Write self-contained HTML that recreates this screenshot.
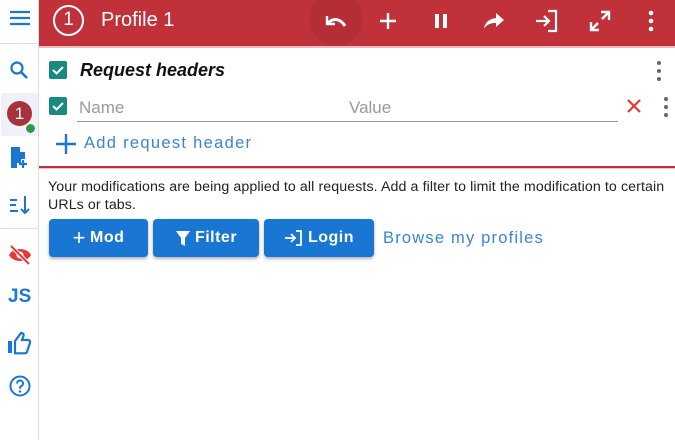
<!DOCTYPE html>
<html><head><meta charset="utf-8"><style>
*{margin:0;padding:0;box-sizing:border-box}
body{width:675px;height:440px;overflow:hidden;background:#fff;font-family:"Liberation Sans",sans-serif;position:relative}
.abs{position:absolute}
#side{left:0;top:0;width:39px;height:440px;border-right:1px solid #ddd;background:#fff}
#hdr{left:39px;top:0;width:636px;height:46px;background:#c0313a;overflow:hidden}
.btn{position:absolute;top:219px;height:38px;background:#1976d2;color:#fff;border-radius:4px;box-shadow:0 2px 3px rgba(0,0,0,.3);font-size:16px;font-weight:bold;display:flex;align-items:center;justify-content:center;gap:4px;letter-spacing:.5px}
.cb{position:absolute;width:18px;height:18px;background:#1a8a7e;border-radius:2px}
</style></head><body>
<div id="side" class="abs">
 <svg class="abs" style="left:9px;top:9px" width="22" height="18"><path d="M1 3h20M1 9h20M1 15h20" stroke="#1976d2" stroke-width="2.2"/></svg>
 <div class="abs" style="left:0;top:43px;width:39px;border-top:1px solid #e2e2e2"></div>
 <svg class="abs" style="left:9px;top:60px" width="22" height="22"><circle cx="8" cy="8" r="5.5" stroke="#1976d2" stroke-width="2.2" fill="none"/><path d="M12 12l6 6" stroke="#1976d2" stroke-width="2.6"/></svg>
 <div class="abs" style="left:1px;top:93px;width:37px;height:43px;background:#eef2f8;border-radius:3px"></div>
 <div class="abs" style="left:7px;top:101px;width:25px;height:25px;border-radius:50%;background:#a8323b;color:#fff;font-size:17px;text-align:center;line-height:25px">1</div>
 <div class="abs" style="left:25px;top:123px;width:11px;height:11px;border-radius:50%;background:#2e9a48;border:1px solid #fff"></div>
 <svg class="abs" style="left:9px;top:146px" width="24" height="24"><path d="M2 1h9l5 5v7h-4v4h-4v5H2z" fill="#1976d2"/><path d="M11 1v5h5" fill="#fff"/><path d="M14 14v8M10 18h8" stroke="#1976d2" stroke-width="2.2"/></svg>
 <svg class="abs" style="left:8px;top:194px" width="24" height="22"><path d="M2 6h7M2 11h6M2 17h8" stroke="#1976d2" stroke-width="2"/><path d="M17 2v17M13 15l4 4 4-4" stroke="#1976d2" stroke-width="2" fill="none"/></svg>
 <div class="abs" style="left:0;top:228px;width:39px;border-top:1px solid #e2e2e2"></div>
 <svg class="abs" style="left:8px;top:244px" width="24" height="22"><path d="M1 11c4-8 18-8 22 0-4 8-18 8-22 0z" fill="#e53935"/><circle cx="12" cy="11" r="3.5" fill="#fff"/><path d="M3 2l18 18" stroke="#fff" stroke-width="4"/><path d="M3 2l18 18" stroke="#e53935" stroke-width="2"/></svg>
 <div class="abs" style="left:8px;top:286px;font-size:19px;font-weight:bold;color:#1976d2">JS</div>
 <svg class="abs" style="left:7px;top:331px" width="26" height="24"><rect x="1" y="10" width="4" height="12" fill="#1976d2"/><path d="M8 10l6-8c2 0 3 1 2.5 3L15 9h6c1.5 0 2.5 1.2 2 2.8l-3 9c-.4 1-1.2 1.5-2.2 1.5H8z" fill="none" stroke="#1976d2" stroke-width="2.2"/></svg>
 <svg class="abs" style="left:9px;top:375px" width="22" height="22"><circle cx="11" cy="11" r="9.5" stroke="#1976d2" stroke-width="2" fill="none"/><path d="M8 8.5a3 3 0 1 1 4 2.8c-1 .5-1 1-1 2.5" stroke="#1976d2" stroke-width="2" fill="none"/><circle cx="11" cy="16.5" r="1.2" fill="#1976d2"/></svg>
</div>
<div id="hdr" class="abs">
 <div class="abs" style="left:14px;top:5px;width:31px;height:31px;border:2.5px solid #fff;border-radius:50%;color:#fff;font-size:19px;text-align:center;line-height:26px">1</div>
 <div class="abs" style="left:62px;top:9px;color:#fff;font-size:20px">Profile 1</div>
 <div class="abs" style="left:270px;top:-8px;width:54px;height:54px;border-radius:50%;background:#b52e36"></div>
 <svg class="abs" style="left:284px;top:12px" width="26" height="22"><path d="M4 4v8h8" fill="none" stroke="#fff" stroke-width="2.4"/><path d="M5 11c5-5 12-5 17 3" fill="none" stroke="#fff" stroke-width="3"/></svg>
 <svg class="abs" style="left:339px;top:11px" width="20" height="20"><path d="M10 2v16M2 10h16" stroke="#fff" stroke-width="2.4"/></svg>
 <svg class="abs" style="left:392px;top:11px" width="20" height="20"><rect x="4" y="3" width="4" height="14" fill="#fff"/><rect x="12" y="3" width="4" height="14" fill="#fff"/></svg>
 <svg class="abs" style="left:443px;top:11px" width="24" height="22"><path d="M14 2l8 7-8 7v-4C9 12 5 13 2 18c1-7 5-10 12-11z" fill="#fff"/></svg>
 <svg class="abs" style="left:495px;top:9px" width="26" height="24"><path d="M2 12h12M10 7l5 5-5 5" fill="none" stroke="#fff" stroke-width="2.2"/><path d="M14 2h8v20h-8" fill="none" stroke="#fff" stroke-width="2.2"/></svg>
 <svg class="abs" style="left:549px;top:9px" width="24" height="24"><path d="M13 3h8v8M21 3l-7 7M3 13v8h8M3 21l7-7" fill="none" stroke="#fff" stroke-width="2.4"/></svg>
 <svg class="abs" style="left:607px;top:10px" width="10" height="24"><circle cx="5" cy="3" r="2.3" fill="#fff"/><circle cx="5" cy="11" r="2.3" fill="#fff"/><circle cx="5" cy="19" r="2.3" fill="#fff"/></svg>
</div>
<div class="abs" style="left:39px;top:46px;width:636px;height:2px;background:#f3b9bc"></div>
<div class="cb" style="left:49px;top:61px"><svg width="18" height="18"><path d="M4 9l3.5 3.5L14 6" stroke="#fff" stroke-width="2" fill="none"/></svg></div>
<div class="abs" style="left:80px;top:60px;font-size:18px;font-weight:bold;font-style:italic;color:#111">Request headers</div>
<svg class="abs" style="left:654px;top:60px" width="10" height="22"><circle cx="5" cy="3" r="2" fill="#666"/><circle cx="5" cy="11" r="2" fill="#666"/><circle cx="5" cy="19" r="2" fill="#666"/></svg>
<div class="cb" style="left:49px;top:97px"><svg width="18" height="18"><path d="M4 9l3.5 3.5L14 6" stroke="#fff" stroke-width="2" fill="none"/></svg></div>
<div class="abs" style="left:79px;top:98px;font-size:17px;color:#999">Name</div>
<div class="abs" style="left:349px;top:98px;font-size:17px;color:#999">Value</div>
<div class="abs" style="left:77px;top:121px;width:541px;border-top:1px solid #999"></div>
<svg class="abs" style="left:626px;top:98px" width="16" height="16"><path d="M2 2l12 12M14 2L2 14" stroke="#e53935" stroke-width="2.2"/></svg>
<svg class="abs" style="left:661px;top:96px" width="10" height="22"><circle cx="5" cy="3" r="2" fill="#666"/><circle cx="5" cy="11" r="2" fill="#666"/><circle cx="5" cy="19" r="2" fill="#666"/></svg>
<svg class="abs" style="left:55px;top:133px" width="22" height="22"><path d="M11 1v20M1 11h20" stroke="#1976d2" stroke-width="2.4"/></svg>
<div class="abs" style="left:84px;top:134px;font-size:16.5px;color:#3a86cf;letter-spacing:1.3px">Add request header</div>
<div class="abs" style="left:39px;top:166px;width:636px;height:2px;background:#c0313a"></div>
<div class="abs" style="left:39px;top:168px;width:636px;height:1px;background:#f2c0c2"></div>
<div class="abs" style="left:48px;top:178px;width:627px;font-size:14.2px;line-height:18px;color:#222;white-space:nowrap;letter-spacing:0.1px">Your modifications are being applied to all requests. Add a filter to limit the modification to certain<br>URLs or tabs.</div>
<div class="btn" style="left:49px;width:99px"><span style="font-size:22px;font-weight:normal">+</span>Mod</div>
<div class="btn" style="left:153px;width:106px"><svg width="16" height="18"><path d="M1 2h14l-5 7v8l-4-2V9z" fill="#fff"/></svg>Filter</div>
<div class="btn" style="left:264px;width:110px"><svg width="20" height="18"><path d="M1 9h9M7 5l4 4-4 4" fill="none" stroke="#fff" stroke-width="1.8"/><path d="M12 2h5v14h-5" fill="none" stroke="#fff" stroke-width="1.8"/></svg>Login</div>
<div class="abs" style="left:383px;top:229px;font-size:16.5px;color:#3a86cf;letter-spacing:1.2px">Browse my profiles</div>
</body></html>
